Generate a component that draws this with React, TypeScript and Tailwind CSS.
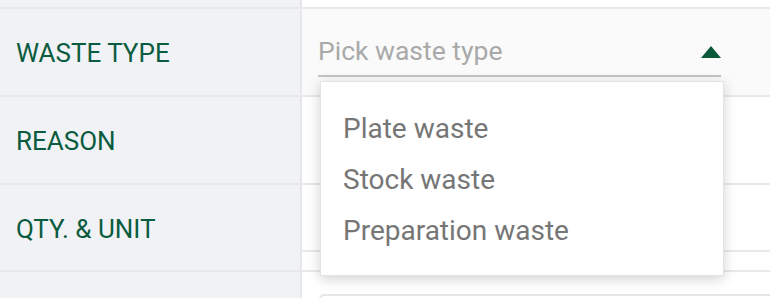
import React from 'react';

const options = ['Plate waste', 'Stock waste', 'Preparation waste'];

const Label = ({ text }: { text: string }) => (
    <div className="w-[302px] shrink-0 bg-[#f1f2f6] border-r-2 border-[#e6e7eb] flex items-center pl-4 pt-[3px] text-[26px] text-[#0b5c3e]">
        {text}
    </div>
);

const App = () => {
    return (
        <div className="relative w-[770px] h-[298px] overflow-hidden bg-white font-['Roboto','Liberation_Sans',sans-serif]">
            {/* partial row above */}
            <div className="flex h-[9px] border-b-2 border-[#e9e9ed]">
                <div className="w-[302px] shrink-0 bg-[#f1f2f6] border-r-2 border-[#e6e7eb]" />
                <div className="flex-1 bg-white" />
            </div>

            {/* waste type */}
            <div className="flex h-[88px] border-b-2 border-[#e9e9ed]">
                <Label text="WASTE TYPE" />
                <div className="relative flex-1 bg-[#fafafa] pl-4 pr-[49px]">
                    <div className="flex items-center justify-between h-[68px] pt-[17px] border-b-2 border-[#c4c4c4]">
                        <span className="text-[26.5px] text-[#a9a9a9]">Pick waste type</span>
                        <svg width="20" height="12" viewBox="0 0 20 12" className="mt-[2px]">
                            <polygon points="10,0 20,12 0,12" fill="#0a5a3a" />
                        </svg>
                    </div>
                </div>
            </div>

            {/* reason */}
            <div className="flex h-[88px] border-b-2 border-[#e9e9ed]">
                <Label text="REASON" />
                <div className="flex-1 bg-white" />
            </div>

            {/* qty & unit */}
            <div className="flex h-[87px] border-b-2 border-[#e9e9ed]">
                <Label text="QTY. & UNIT" />
                <div className="flex-1 bg-white flex flex-col">
                    <div className="h-[67px] border-b-2 border-[#e9e9ed]" />
                </div>
            </div>

            {/* next row */}
            <div className="flex h-[40px]">
                <div className="w-[302px] shrink-0 bg-[#f1f2f6] border-r-2 border-[#e6e7eb]" />
                <div className="flex-1 bg-white pl-[17px] pt-[22px]">
                    <div className="h-[40px] border-2 border-[#e6e6e6] rounded-[5px] mr-[-10px]" />
                </div>
            </div>

            {/* dropdown menu */}
            <div className="absolute left-[320px] top-[81px] w-[404px] h-[195px] bg-white border border-[#e3e3e3] shadow-[0_3px_12px_rgba(0,0,0,0.18)] py-[21px]">
                {options.map((o) => (
                    <div key={o} className="h-[51px] flex items-center pl-[22px] text-[28px] text-[#767676]">
                        {o}
                    </div>
                ))}
            </div>
        </div>
    );
};

export default App;
